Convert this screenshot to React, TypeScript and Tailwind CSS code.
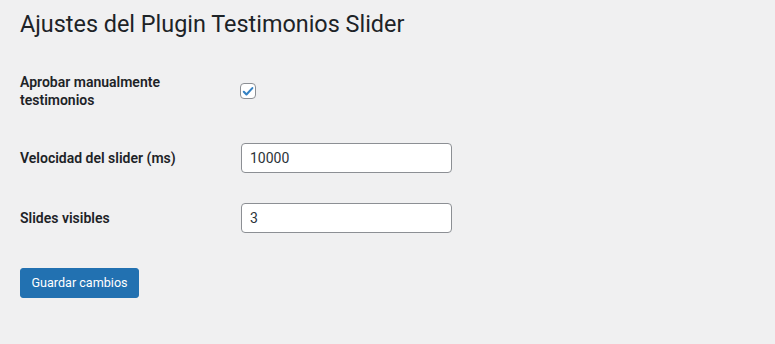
import React, { useState } from 'react';

const CheckIcon: React.FC = () => (
  <svg viewBox="0 0 20 20" className="w-[15px] h-[15px]">
    <path d="M4 10.5l3.8 3.8L16.2 5.2" fill="none" stroke="#3582c4" strokeWidth="3" strokeLinecap="round" strokeLinejoin="round" />
  </svg>
);

const App: React.FC = () => {
  const [approve, setApprove] = useState(true);
  const [speed, setSpeed] = useState('10000');
  const [visible, setVisible] = useState('3');

  return (
    <div
      className="min-h-screen w-full bg-[#f0f0f1] text-[#1d2327] pl-5"
      style={{ fontFamily: 'Roboto, "Liberation Sans", sans-serif' }}
    >
      <h1 className="pt-[9px] text-[23.4px] leading-[30px] font-normal">Ajustes del Plugin Testimonios Slider</h1>

      <form onSubmit={(e) => e.preventDefault()}>
        <div className="mt-[34px] flex items-center">
          <label className="w-[220px] shrink-0">
            <span className="block w-[200px] text-[14px] leading-[18px] font-semibold">Aprobar manualmente testimonios</span>
          </label>
          <button
            type="button"
            onClick={() => setApprove(!approve)}
            className="w-4 h-4 flex items-center justify-center bg-white border border-[#8c8f94] rounded-[4px]"
          >
            {approve && <CheckIcon />}
          </button>
        </div>

        <div className="mt-[34px] flex items-center">
          <label htmlFor="speed" className="w-[221px] shrink-0 text-[14px] leading-[18px] font-semibold">
            Velocidad del slider (ms)
          </label>
          <input
            id="speed"
            type="text"
            value={speed}
            onChange={(e) => setSpeed(e.target.value)}
            className="w-[211px] h-[30px] px-2 bg-white border border-[#8c8f94] rounded-[4px] text-[14px] text-[#2c3338] outline-none"
          />
        </div>

        <div className="mt-[30px] flex items-center">
          <label htmlFor="visible" className="w-[221px] shrink-0 text-[14px] leading-[18px] font-semibold">
            Slides visibles
          </label>
          <input
            id="visible"
            type="text"
            value={visible}
            onChange={(e) => setVisible(e.target.value)}
            className="w-[211px] h-[30px] px-2 bg-white border border-[#8c8f94] rounded-[4px] text-[14px] text-[#2c3338] outline-none"
          />
        </div>

        <button
          type="submit"
          className="mt-[35px] w-[119px] h-[30px] bg-[#2271b1] border border-[#2271b1] rounded-[3px] text-white text-[12.6px] leading-[28px] text-center"
        >
          Guardar cambios
        </button>
      </form>
    </div>
  );
};

export default App;
